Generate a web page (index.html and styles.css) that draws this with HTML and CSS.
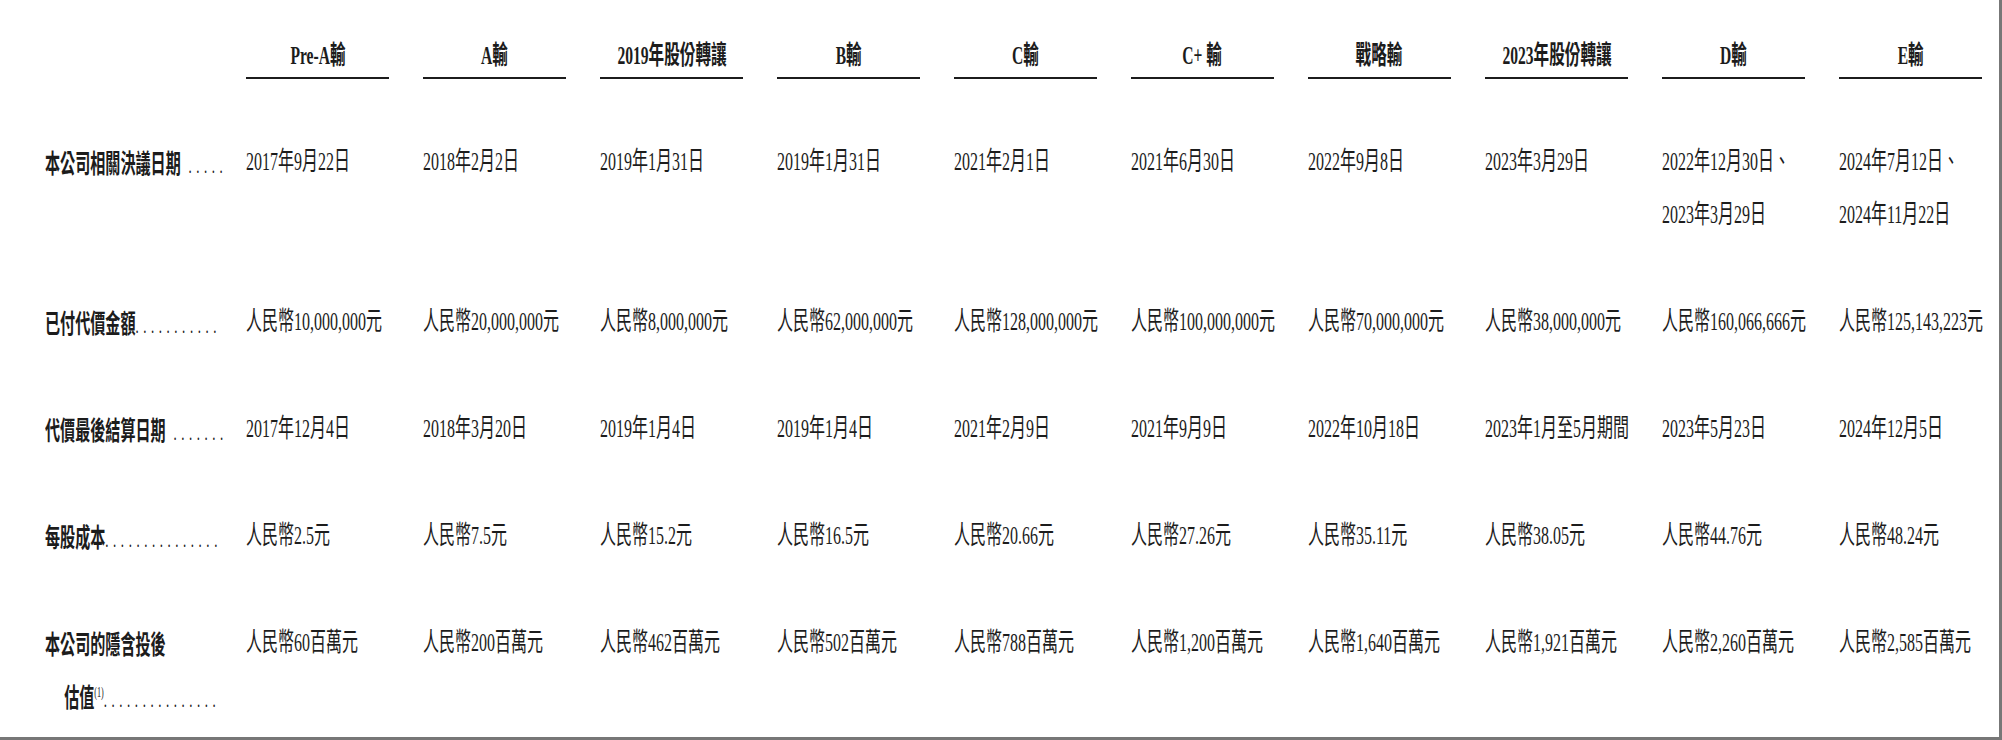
FILE: index.html
```html
<!DOCTYPE html>
<html lang="zh-Hant">
<head>
<meta charset="utf-8">
<title>投資輪次</title>
<link rel="stylesheet" href="styles.css">
</head>
<body>
<div class="page">
  <div class="grid">
    <div class="hcell empty"></div>
    <div class="hcell"><span class="ht">Pre-A輸</span></div>
    <div class="hcell"><span class="ht">A輸</span></div>
    <div class="hcell"><span class="ht">2019年股份轉讓</span></div>
    <div class="hcell"><span class="ht">B輸</span></div>
    <div class="hcell"><span class="ht">C輸</span></div>
    <div class="hcell"><span class="ht">C+ 輸</span></div>
    <div class="hcell"><span class="ht">戰略輸</span></div>
    <div class="hcell"><span class="ht">2023年股份轉讓</span></div>
    <div class="hcell"><span class="ht">D輸</span></div>
    <div class="hcell"><span class="ht">E輸</span></div>

    <div class="label"><span class="lt">本公司相關決議日期<span class="dots"> .....</span></span></div>
    <div class="cell"><span class="dt">2017年9月22日</span></div>
    <div class="cell"><span class="dt">2018年2月2日</span></div>
    <div class="cell"><span class="dt">2019年1月31日</span></div>
    <div class="cell"><span class="dt">2019年1月31日</span></div>
    <div class="cell"><span class="dt">2021年2月1日</span></div>
    <div class="cell"><span class="dt">2021年6月30日</span></div>
    <div class="cell"><span class="dt">2022年9月8日</span></div>
    <div class="cell"><span class="dt">2023年3月29日</span></div>
    <div class="cell"><span class="dt">2022年12月30日、<br>2023年3月29日</span></div>
    <div class="cell"><span class="dt">2024年7月12日、<br>2024年11月22日</span></div>

    <div class="label"><span class="lt">已付代價金額<span class="dots">...........</span></span></div>
    <div class="cell"><span class="dt">人民幣10,000,000元</span></div>
    <div class="cell"><span class="dt">人民幣20,000,000元</span></div>
    <div class="cell"><span class="dt">人民幣8,000,000元</span></div>
    <div class="cell"><span class="dt">人民幣62,000,000元</span></div>
    <div class="cell"><span class="dt">人民幣128,000,000元</span></div>
    <div class="cell"><span class="dt">人民幣100,000,000元</span></div>
    <div class="cell"><span class="dt">人民幣70,000,000元</span></div>
    <div class="cell"><span class="dt">人民幣38,000,000元</span></div>
    <div class="cell"><span class="dt">人民幣160,066,666元</span></div>
    <div class="cell"><span class="dt">人民幣125,143,223元</span></div>

    <div class="label"><span class="lt">代價最後結算日期<span class="dots"> .......</span></span></div>
    <div class="cell"><span class="dt">2017年12月4日</span></div>
    <div class="cell"><span class="dt">2018年3月20日</span></div>
    <div class="cell"><span class="dt">2019年1月4日</span></div>
    <div class="cell"><span class="dt">2019年1月4日</span></div>
    <div class="cell"><span class="dt">2021年2月9日</span></div>
    <div class="cell"><span class="dt">2021年9月9日</span></div>
    <div class="cell"><span class="dt">2022年10月18日</span></div>
    <div class="cell"><span class="dt">2023年1月至5月期間</span></div>
    <div class="cell"><span class="dt">2023年5月23日</span></div>
    <div class="cell"><span class="dt">2024年12月5日</span></div>

    <div class="label"><span class="lt">每股成本<span class="dots">...............</span></span></div>
    <div class="cell"><span class="dt">人民幣2.5元</span></div>
    <div class="cell"><span class="dt">人民幣7.5元</span></div>
    <div class="cell"><span class="dt">人民幣15.2元</span></div>
    <div class="cell"><span class="dt">人民幣16.5元</span></div>
    <div class="cell"><span class="dt">人民幣20.66元</span></div>
    <div class="cell"><span class="dt">人民幣27.26元</span></div>
    <div class="cell"><span class="dt">人民幣35.11元</span></div>
    <div class="cell"><span class="dt">人民幣38.05元</span></div>
    <div class="cell"><span class="dt">人民幣44.76元</span></div>
    <div class="cell"><span class="dt">人民幣48.24元</span></div>

    <div class="label"><span class="lt">本公司的隱含投後<br><span class="indent">估值<sup class="note">(1)</sup><span class="dots">...............</span></span></span></div>
    <div class="cell"><span class="dt">人民幣60百萬元</span></div>
    <div class="cell"><span class="dt">人民幣200百萬元</span></div>
    <div class="cell"><span class="dt">人民幣462百萬元</span></div>
    <div class="cell"><span class="dt">人民幣502百萬元</span></div>
    <div class="cell"><span class="dt">人民幣788百萬元</span></div>
    <div class="cell"><span class="dt">人民幣1,200百萬元</span></div>
    <div class="cell"><span class="dt">人民幣1,640百萬元</span></div>
    <div class="cell"><span class="dt">人民幣1,921百萬元</span></div>
    <div class="cell"><span class="dt">人民幣2,260百萬元</span></div>
    <div class="cell"><span class="dt">人民幣2,585百萬元</span></div>
  </div>
</div>
</body>
</html>
```

FILE: styles.css
```css
html, body {
  margin: 0;
  padding: 0;
  background: #ffffff;
}

.page {
  box-sizing: border-box;
  width: 2002px;
  height: 740px;
  border-right: 3px solid #777777;
  border-bottom: 3px solid #777777;
  padding: 36px 0 0 45px;
  color: #1c1c1c;
  font-family: "Liberation Serif", "Noto Sans CJK TC", serif;
  overflow: hidden;
}

.grid {
  display: grid;
  grid-template-columns: 167px repeat(10, 143px);
  column-gap: 34px;
  row-gap: 54px;
  align-items: start;
}

.hcell {
  height: 41px;
  line-height: 40px;
  border-bottom: 2px solid #1c1c1c;
  margin-bottom: 2px;
  display: flex;
  justify-content: center;
  white-space: nowrap;
}

.hcell.empty {
  border-bottom: none;
}

.ht {
  display: inline-block;
  font-family: "Liberation Serif", "Noto Sans CJK TC", serif;
  font-weight: 700;
  font-size: 26px;
  transform: scaleX(0.6);
  transform-origin: center;
}

.cell,
.label {
  white-space: nowrap;
}

.dt {
  display: block;
  line-height: 53px;
  font-family: "Liberation Serif", "Noto Sans CJK TC", serif;
  font-size: 26px;
  transform: scaleX(0.615);
  transform-origin: left center;
}

.lt {
  display: block;
  line-height: 53px;
  font-family: "Noto Sans CJK TC", sans-serif;
  font-weight: 700;
  font-size: 26px;
  transform: scaleX(0.58);
  transform-origin: left center;
}

.dots {
  font-family: "Liberation Serif", serif;
  font-weight: 400;
  font-size: 22px;
  line-height: 0;
  letter-spacing: 7.9px;
}

.indent {
  padding-left: 33px;
}

.note {
  font-family: "Liberation Serif", serif;
  font-weight: 400;
  font-size: 14px;
  vertical-align: 10px;
  line-height: 0;
}
```
